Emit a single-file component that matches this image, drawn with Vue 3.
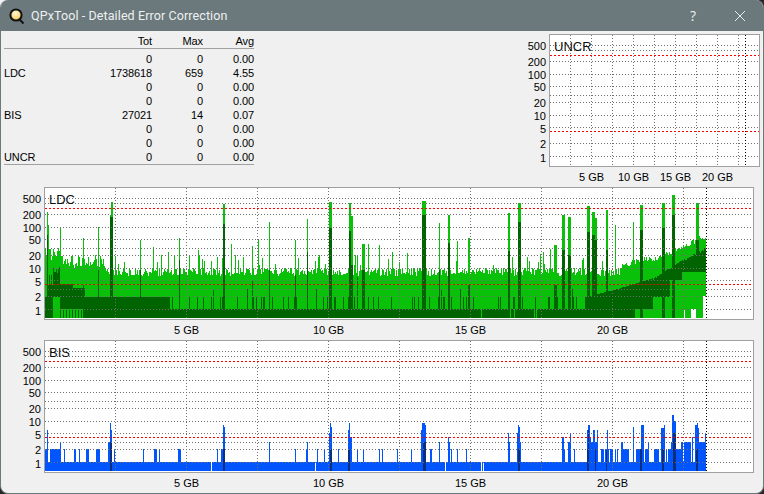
<script setup>
// fixed seed so the traces come out the same on every load
let seed = 4711
const rnd = () => {
  seed = (seed * 1664525 + 1013904223) % 4294967296
  return seed / 4294967296
}

const bar = (x, top, bottom) => `M${x + 0.5} ${top}V${bottom}`

const rows = [
  ['', '0', '0', '0.00'],
  ['LDC', '1738618', '659', '4.55'],
  ['', '0', '0', '0.00'],
  ['', '0', '0', '0.00'],
  ['BIS', '27021', '14', '0.07'],
  ['', '0', '0', '0.00'],
  ['', '0', '0', '0.00'],
  ['UNCR', '0', '0', '0.00']
]

// [x, width, top, dark top]
const ldcSpikes = [
  [47, 1, 212, 235], [48, 1, 225, 0], [60, 1, 227, 0], [83, 1, 238, 285], [98, 1, 227, 270],
  [110, 1, 215, 217], [111, 2, 202, 217], [140, 1, 240, 270], [153, 1, 247, 0], [168, 1, 252, 0],
  [179, 1, 238, 260], [198, 1, 250, 0], [202, 1, 259, 0], [217, 1, 257, 0], [223, 2, 204, 224],
  [231, 1, 244, 0], [238, 1, 260, 0], [252, 1, 246, 280], [258, 1, 240, 0], [269, 1, 222, 270],
  [295, 1, 240, 275], [298, 1, 258, 0], [307, 1, 219, 252], [329, 3, 202, 228], [349, 2, 203, 231],
  [351, 2, 216, 265], [357, 1, 255, 277], [362, 3, 244, 270], [368, 1, 244, 0], [379, 1, 245, 0],
  [388, 1, 259, 0], [422, 4, 201, 215], [439, 1, 223, 270], [448, 2, 215, 243], [457, 1, 241, 0],
  [468, 2, 238, 285], [508, 2, 213, 251], [512, 1, 257, 0], [518, 3, 203, 222], [527, 1, 257, 0],
  [538, 1, 262, 0], [550, 1, 249, 0], [554, 3, 245, 285], [562, 3, 215, 250], [568, 3, 217, 255],
  [587, 3, 206, 232], [592, 3, 212, 235], [595, 2, 218, 240], [606, 2, 210, 250], [615, 1, 225, 0],
  [633, 1, 222, 0], [640, 3, 205, 230], [662, 3, 203, 228], [672, 3, 195, 215], [696, 3, 203, 240]
]

const ldcDarkTop = (x) => {
  if (x < 47) return 297
  if (x < 53) return x % 2 ? 275 : 285
  if (x < 60) return 267 + rnd() * 6
  if (x < 73) return 284
  if (x < 85) return 288
  if (x < 170) return 297
  if (x < 585) {
    const r = rnd()
    if (r < 0.03) return 289
    return r < 0.15 ? 297 : 309
  }
  if (x < 620) return 297 - (x - 585) * 0.25
  if (x < 653) return 288 - (x - 620) * 0.3
  if (x < 680) return 278 - (x - 653) * 0.65 + rnd() * 2
  return 260 - (x - 680) * 0.5 + rnd() * 3
}

const ldcDarkBottom = (x) => {
  if (x >= 53 && x < 60) return 297
  if (x >= 60 && x < 85 && x % 3 !== 0) return 309
  if ([481, 510, 514, 534, 536].includes(x)) return 309
  if (x >= 682) return 272
  if (x >= 670) return 280
  if (x >= 653) return 297
  if (x >= 635) return 309
  return 318
}

const ldcLightTop = (x) => {
  if (x < 60) return 248 + rnd() * 12
  if (x < 105) return 255 + rnd() * 14
  if (x < 620) return rnd() < 0.07 ? 252 + rnd() * 14 : 268 + rnd() * 8
  if (x < 660) return 262 - (x - 620) * 0.2 + rnd() * 6
  return 254 - (x - 660) * 0.45 + rnd() * 5
}

const ldcTraces = () => {
  let light = ''
  let dark = ''
  for (let x = 45; x <= 705; x++) {
    let bottom = 318
    if (x === 684 || (x >= 691 && x <= 696)) bottom = 309
    if (x >= 703) bottom = 296
    light += bar(x, Math.round(ldcLightTop(x)), bottom)

    const from = Math.round(ldcDarkTop(x))
    const to = ldcDarkBottom(x)
    if (from < to) dark += bar(x, from, to)
  }
  for (const [x, w, top, darkTop] of ldcSpikes) {
    for (let i = 0; i < w; i++) {
      light += bar(x + i, top, 318)
      if (darkTop) dark += bar(x + i, darkTop, x >= 690 ? 272 : 318)
    }
  }
  return [
    { color: '#08c108', d: light },
    { color: '#006400', d: dark }
  ]
}

// [x, width, top]
const bisSpikes = [
  [45, 3, 449], [47, 1, 430], [50, 2, 449], [52, 9, 449], [60, 1, 442], [64, 1, 449], [74, 2, 449],
  [79, 1, 449], [86, 3, 449], [96, 4, 449], [108, 2, 442], [110, 1, 423], [111, 1, 430], [114, 1, 449],
  [143, 1, 449], [154, 3, 449], [159, 1, 449], [178, 3, 449], [217, 1, 449], [221, 2, 449], [223, 1, 425],
  [224, 1, 427], [269, 1, 442], [295, 1, 449], [306, 2, 449], [307, 1, 442], [317, 1, 449], [324, 1, 449],
  [329, 1, 433], [330, 1, 423], [331, 1, 427], [338, 1, 449], [348, 1, 430], [349, 1, 423], [350, 2, 437],
  [357, 1, 449], [363, 1, 449], [379, 1, 449], [382, 1, 449], [397, 1, 449], [411, 1, 449], [421, 1, 430],
  [422, 3, 423], [425, 1, 425], [430, 2, 449], [439, 1, 442], [448, 2, 442], [448, 1, 437], [451, 1, 449],
  [457, 1, 449], [466, 1, 449], [508, 2, 442], [508, 1, 433], [517, 1, 433], [518, 1, 425], [519, 1, 427],
  [520, 1, 442], [562, 2, 437], [564, 1, 449], [568, 2, 442], [570, 1, 433], [574, 1, 449], [587, 1, 430],
  [588, 2, 425], [590, 1, 437], [591, 2, 442], [593, 2, 430], [595, 2, 442], [597, 1, 430], [601, 3, 449],
  [605, 4, 449], [607, 1, 430], [610, 3, 449], [615, 1, 449], [617, 1, 449], [621, 2, 442], [623, 6, 449],
  [633, 1, 427], [636, 5, 449], [641, 3, 425], [645, 3, 449], [648, 1, 442], [654, 5, 449], [661, 3, 428],
  [664, 1, 425], [666, 1, 449], [668, 3, 449], [671, 1, 442], [672, 2, 415], [674, 2, 421], [676, 6, 449],
  [681, 2, 442], [684, 7, 442], [692, 1, 437], [695, 2, 425], [697, 1, 423], [698, 1, 428], [699, 6, 442],
  [705, 1, 433]
]

const bisDark = [
  [110, 2, 442], [223, 2, 449], [330, 2, 449], [348, 2, 450], [423, 3, 442], [518, 2, 449],
  [587, 1, 449], [588, 1, 430], [595, 1, 449], [606, 1, 449], [640, 2, 449], [662, 2, 449], [673, 3, 433],
  [696, 2, 449]
]

const bisTraces = () => {
  let blue = ''
  let dark = ''
  for (let x = 45; x <= 705; x++) {
    if (![211, 315, 445, 481, 483].includes(x)) blue += bar(x, 462, 471)
  }
  for (const [x, w, top] of bisSpikes) {
    for (let i = 0; i < w; i++) blue += bar(x + i, top, 462)
  }
  for (const [x, w, top] of bisDark) {
    for (let i = 0; i < w; i++) dark += bar(x + i, top, 471)
  }
  return [
    { color: '#0055ff', d: blue },
    { color: '#0a2f7c', d: dark }
  ]
}

const yLabels = [
  ['500', 12], ['200', 28], ['100', 41], ['50', 53], ['20', 69], ['10', 82], ['5', 95], ['2', 110], ['1', 124]
]
const hLines = [11, 16, 27, 40, 52, 61, 68, 81, 93, 102, 109, 122]

const makeChart = (name, left, top, right, originX, step, endX, traces) => {
  const xs = []
  for (let k = 1; left + step * k < right; k++) xs.push(left + step * k)
  return {
    name, left, top, right, endX, traces,
    bottom: top + 132,
    width: right + 1 - originX,
    vbox: `${originX} ${top} ${right + 1 - originX} 150`,
    wide: name !== 'UNCR',
    xs,
    ticks: [2, 4, 6, 8].map((k, i) => ({ x: left + step * k, text: `${(i + 1) * 5} GB` })),
    lines: name === 'UNCR' ? hLines.filter((y) => y !== 102) : hLines
  }
}

const charts = [
  makeChart('UNCR', 549, 34, 759, 510, 21, 745, []),
  makeChart('LDC', 44, 187, 753, 4, 71, 706, ldcTraces()),
  makeChart('BIS', 44, 340, 753, 4, 71, 706, bisTraces())
]
</script>

<template>
  <div class="desktop">
    <div class="window">
      <header class="titlebar">
        <svg class="app-icon" width="18" height="18" viewBox="0 0 18 18">
          <defs>
            <radialGradient id="lens" cx="0.45" cy="0.35" r="0.7">
              <stop offset="0" stop-color="#fff6dc" />
              <stop offset="0.55" stop-color="#f8dc8a" />
              <stop offset="1" stop-color="#eea928" />
            </radialGradient>
          </defs>
          <path d="M11 12l4.5 4.5" stroke="#111" stroke-width="2" />
          <circle cx="8" cy="8" r="5.6" fill="url(#lens)" stroke="#111" stroke-width="2" />
        </svg>
        <span class="title">QPxTool - Detailed Error Correction</span>
        <span class="help">?</span>
        <svg class="close" width="12" height="12" viewBox="0 0 12 12">
          <path d="M1 1l10 10M11 1L1 11" stroke="#e8ecec" stroke-width="1" fill="none" />
        </svg>
      </header>

      <main class="content">
        <table class="stats">
          <thead>
            <tr><th></th><th>Tot</th><th>Max</th><th>Avg</th></tr>
          </thead>
          <tbody>
            <tr v-for="(row, i) in rows" :key="i">
              <td v-for="(cell, j) in row" :key="j">{{ cell }}</td>
            </tr>
          </tbody>
        </table>

        <svg
          v-for="c in charts"
          :key="c.name"
          :class="['chart', { wide: c.wide }]"
          :width="c.width"
          height="150"
          :viewBox="c.vbox"
        >
          <rect :x="c.left" :y="c.top" :width="c.right - c.left" height="132" class="plot" />
          <path v-for="t in c.traces" :key="t.color" :d="t.d" :stroke="t.color" class="trace" />
          <g class="grid">
            <path v-for="x in c.xs" :key="x" :d="`M${x + 0.5} ${c.top + 1}V${c.bottom}`" />
            <path v-for="y in c.lines" :key="y" :d="`M${c.left + 1} ${c.top + y + 0.5}H${c.right}`" />
          </g>
          <path class="limit" :d="`M${c.left + 1} ${c.top + 21.5}H${c.right}M${c.left + 1} ${c.top + 97.5}H${c.right}`" />
          <path class="end" :d="`M${c.endX + 0.5} ${c.top + 1}V${c.bottom}`" />
          <rect :x="c.left + 0.5" :y="c.top + 0.5" :width="c.right - c.left" height="132" class="frame" />
          <text :x="c.left + 5" :y="c.top + 17" class="name">{{ c.name }}</text>
          <text v-for="l in yLabels" :key="l[0]" :x="c.left - 3" :y="c.top + l[1] + 4" class="ylabel">{{ l[0] }}</text>
          <text v-for="t in c.ticks" :key="t.x" :x="t.x + 0.5" :y="c.bottom + 15" class="xlabel">{{ t.text }}</text>
        </svg>
      </main>
    </div>
  </div>
</template>

<style scoped>
.desktop {
  width: 764px;
  height: 494px;
  background: linear-gradient(#f2f2f2, #f2f2f2) 0 0 / 10px 10px no-repeat, #2b2325;
}

.window {
  box-sizing: border-box;
  width: 764px;
  height: 494px;
  display: flex;
  flex-direction: column;
  border: 1px solid #6b787c;
  border-top: none;
  border-radius: 8px;
  overflow: hidden;
  background: #f0f0f0;
  font-family: "Liberation Sans", Arial, sans-serif;
}

.titlebar {
  flex: none;
  display: flex;
  align-items: center;
  height: 31px;
  padding-left: 7px;
  background: #6b787c;
  color: #eef1f1;
}

.app-icon {
  flex: none;
}

.title {
  margin-left: 5px;
  font-family: Roboto, sans-serif;
  font-size: 12.5px;
  letter-spacing: 0.1px;
}

.help {
  margin-left: auto;
  font-family: "Open Sans", sans-serif;
  font-size: 14px;
}

.close {
  margin: 0 17px 0 38px;
}

.content {
  display: grid;
  grid-template-columns: 1fr auto;
  align-items: start;
  gap: 3px 0;
  padding: 3px 3px 0;
}

.stats {
  width: 250px;
  border-collapse: collapse;
  border-bottom: 1px solid #a0a0a0;
  font-size: 11px;
  letter-spacing: -0.12px;
  color: #000;
}

.stats th,
.stats td {
  height: 14px;
  padding: 0;
  font-weight: normal;
  text-align: right;
  line-height: 14px;
}

.stats thead {
  border-bottom: 1px solid #a0a0a0;
}

.stats th:first-child,
.stats td:first-child {
  width: 50px;
  text-align: left;
}

.stats th:nth-child(2),
.stats td:nth-child(2) {
  width: 98px;
}

.stats th:nth-child(3),
.stats td:nth-child(3) {
  width: 51px;
}

.stats tbody tr:first-child td {
  padding-top: 3px;
}

.chart {
  display: block;
  font-family: "Liberation Sans", Arial, sans-serif;
}

.wide {
  grid-column: 1 / -1;
}

.plot {
  fill: #fff;
}

.frame {
  fill: none;
  stroke: #a0a0a0;
  stroke-width: 1;
  shape-rendering: crispEdges;
}

.trace {
  fill: none;
  stroke-width: 1;
  shape-rendering: crispEdges;
}

.grid path {
  fill: none;
  stroke: #707070;
  stroke-width: 1;
  stroke-dasharray: 1 2;
  shape-rendering: crispEdges;
}

.limit {
  fill: none;
  stroke: #ff0000;
  stroke-width: 1;
  stroke-dasharray: 2 2;
  shape-rendering: crispEdges;
}

.end {
  fill: none;
  stroke: #000;
  stroke-width: 1;
  stroke-dasharray: 1 2;
  shape-rendering: crispEdges;
}

.name {
  font-size: 13px;
  fill: #101010;
}

.ylabel {
  font-size: 11px;
  text-anchor: end;
  fill: #000;
}

.xlabel {
  font-size: 11px;
  text-anchor: middle;
  fill: #000;
}
</style>

<style>
html,
body {
  margin: 0;
  padding: 0;
  background: #2b2325;
}
</style>
